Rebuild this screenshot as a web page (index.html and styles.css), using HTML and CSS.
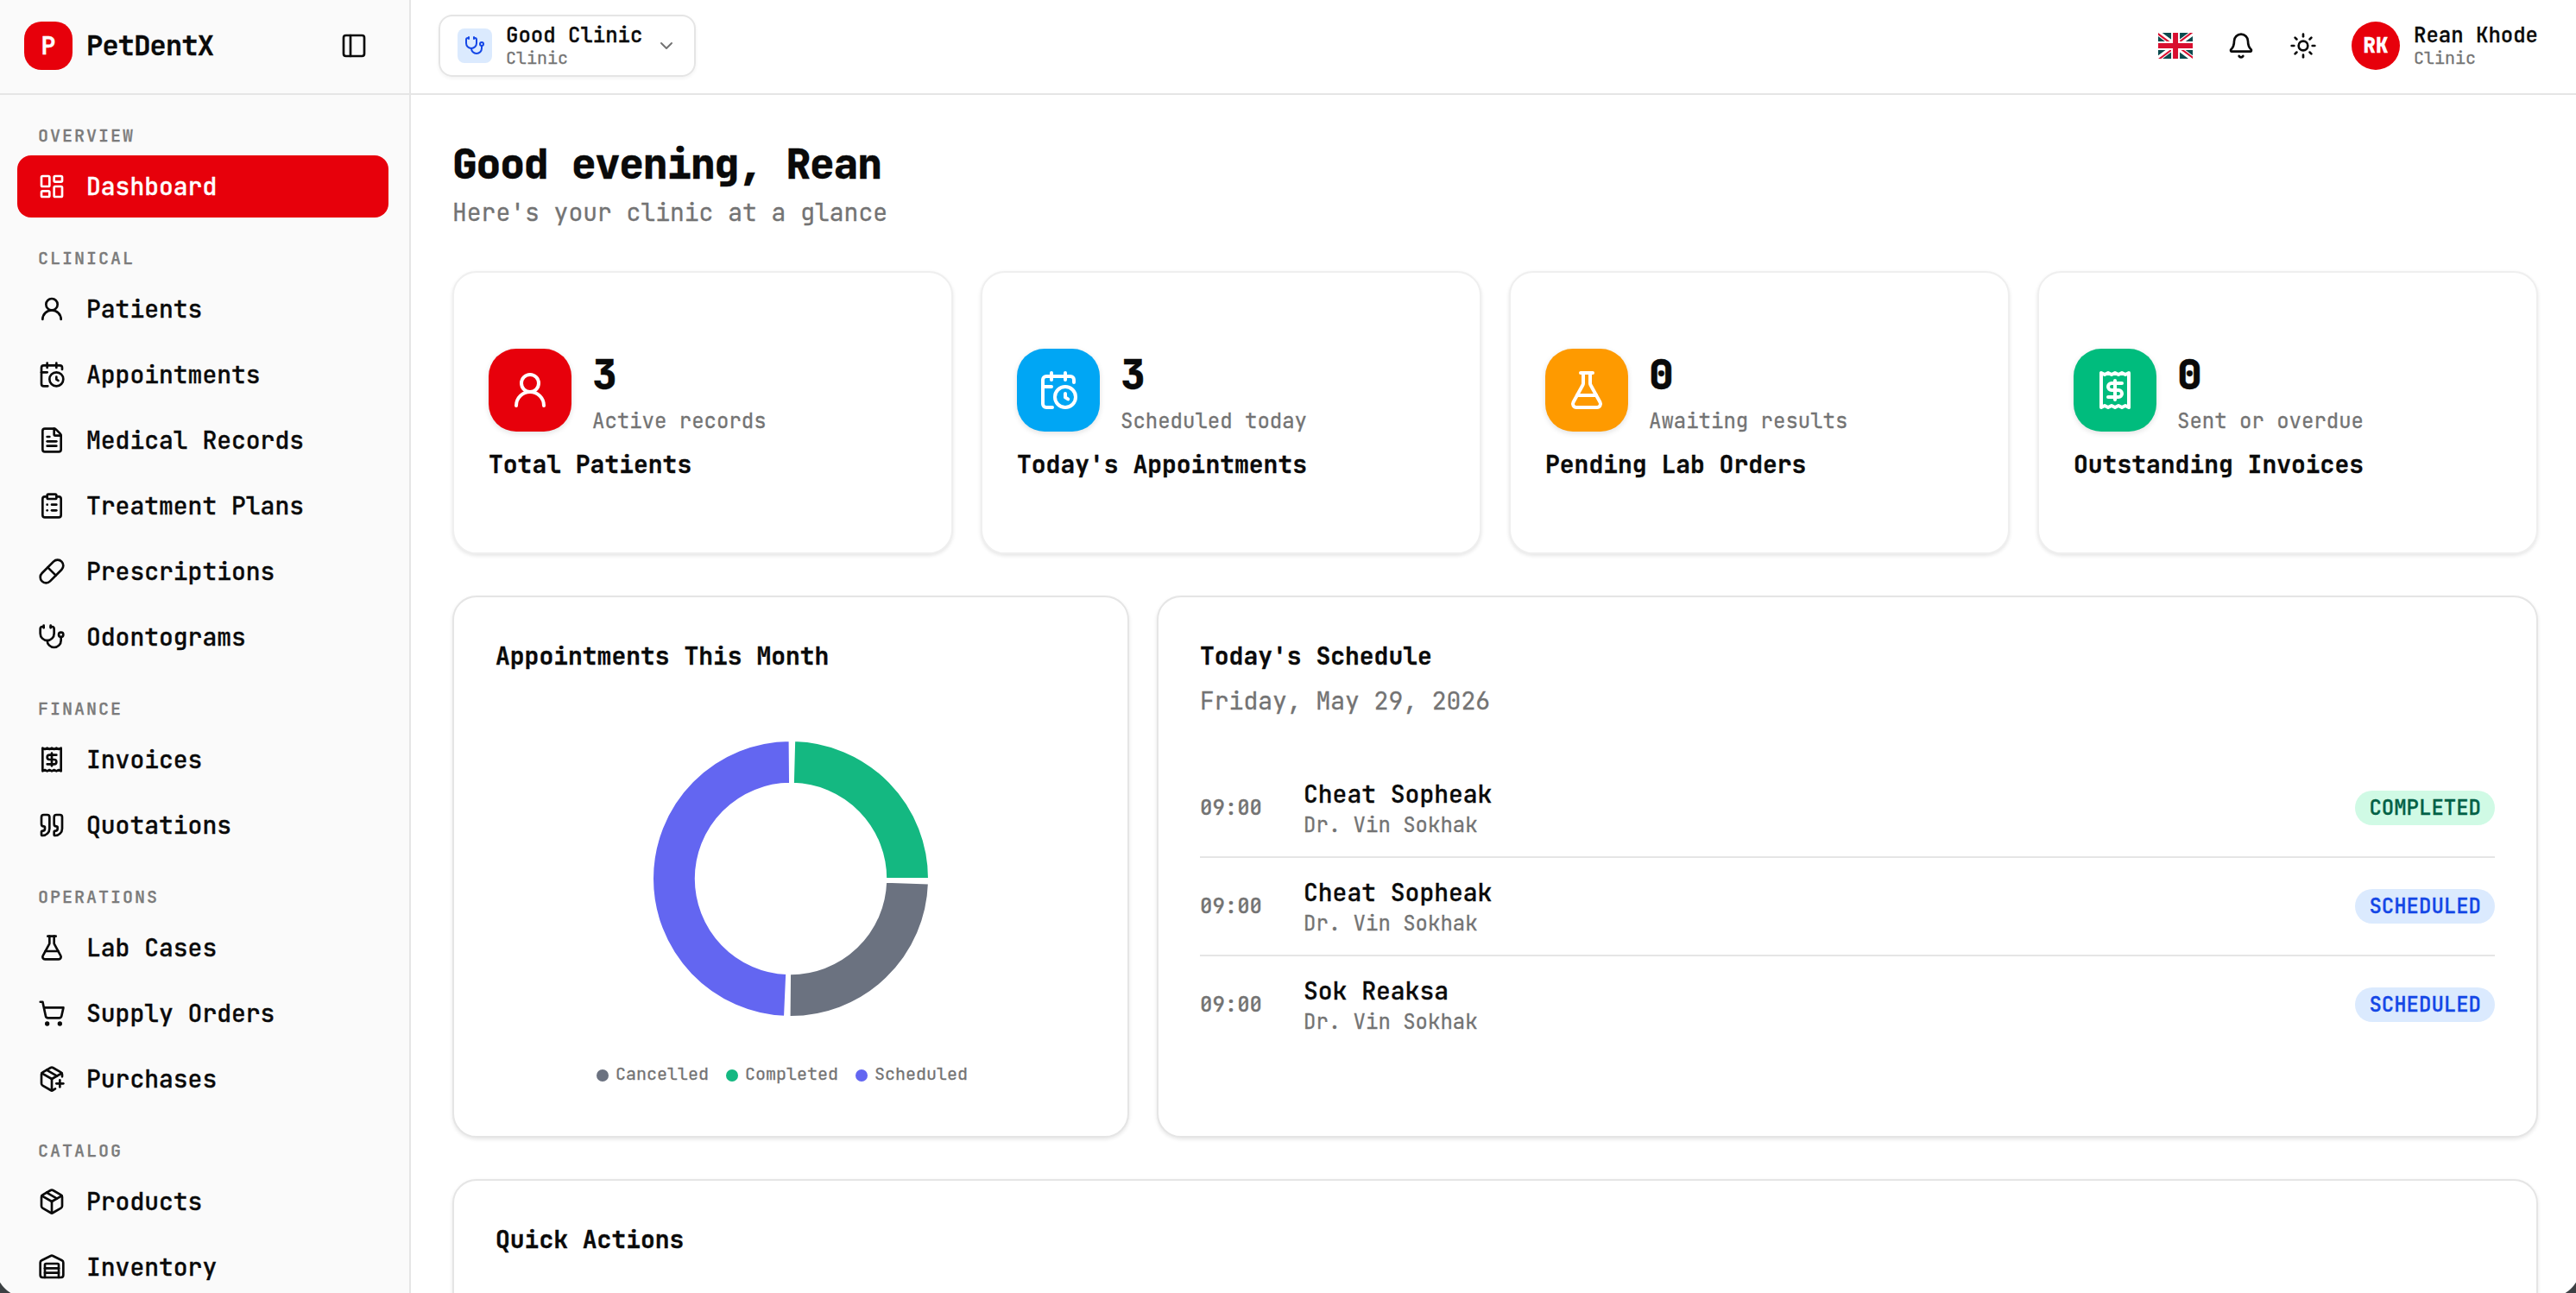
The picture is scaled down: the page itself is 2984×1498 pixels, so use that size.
FILE: index.html
```html
<!DOCTYPE html>
<html lang="en">
<head>
    <meta charset="UTF-8">
    <meta name="viewport" content="width=device-width, initial-scale=1.0">
    <title>PetDentX - Dashboard</title>
    <link rel="stylesheet" href="styles.css">
</head>
<body>

    <!-- Icon set -->
    <svg class="sprite" xmlns="http://www.w3.org/2000/svg">
        <symbol id="i-panel" viewBox="0 0 24 24"><rect width="18" height="18" x="3" y="3" rx="2"/><path d="M9 3v18"/></symbol>
        <symbol id="i-dashboard" viewBox="0 0 24 24"><rect width="7" height="9" x="3" y="3" rx="1"/><rect width="7" height="5" x="14" y="3" rx="1"/><rect width="7" height="9" x="14" y="12" rx="1"/><rect width="7" height="5" x="3" y="16" rx="1"/></symbol>
        <symbol id="i-user" viewBox="0 0 24 24"><circle cx="12" cy="8" r="5"/><path d="M20 21a8 8 0 0 0-16 0"/></symbol>
        <symbol id="i-calendar" viewBox="0 0 24 24"><path d="M16 14v2.2l1.6 1"/><path d="M16 2v4"/><path d="M21 7.5V6a2 2 0 0 0-2-2H5a2 2 0 0 0-2 2v14a2 2 0 0 0 2 2h3.5"/><path d="M3 10h5"/><path d="M8 2v4"/><circle cx="16" cy="16" r="6"/></symbol>
        <symbol id="i-file" viewBox="0 0 24 24"><path d="M6 22a2 2 0 0 1-2-2V4a2 2 0 0 1 2-2h8a2.4 2.4 0 0 1 1.704.706l3.588 3.588A2.4 2.4 0 0 1 20 8v12a2 2 0 0 1-2 2z"/><path d="M14 2v5a1 1 0 0 0 1 1h5"/><path d="M10 9H8"/><path d="M16 13H8"/><path d="M16 17H8"/></symbol>
        <symbol id="i-clipboard" viewBox="0 0 24 24"><rect width="8" height="4" x="8" y="2" rx="1"/><path d="M16 4h2a2 2 0 0 1 2 2v14a2 2 0 0 1-2 2H6a2 2 0 0 1-2-2V6a2 2 0 0 1 2-2h2"/><path d="M12 11h4"/><path d="M12 16h4"/><path d="M8 11h.01"/><path d="M8 16h.01"/></symbol>
        <symbol id="i-pill" viewBox="0 0 24 24"><path d="m10.5 20.5 10-10a4.95 4.95 0 1 0-7-7l-10 10a4.95 4.95 0 1 0 7 7Z"/><path d="m8.5 8.5 7 7"/></symbol>
        <symbol id="i-stethoscope" viewBox="0 0 24 24"><path d="M11 2v2"/><path d="M5 2v2"/><path d="M5 3H4a2 2 0 0 0-2 2v4a6 6 0 0 0 12 0V5a2 2 0 0 0-2-2h-1"/><path d="M8 15a6 6 0 0 0 12 0v-3"/><circle cx="20" cy="10" r="2"/></symbol>
        <symbol id="i-receipt" viewBox="0 0 24 24"><path d="M4 2v20l2-1 2 1 2-1 2 1 2-1 2 1 2-1 2 1V2l-2 1-2-1-2 1-2-1-2 1-2-1-2 1Z"/><path d="M16 8h-6a2 2 0 1 0 0 4h4a2 2 0 1 1 0 4H8"/><path d="M12 17.5v-11"/></symbol>
        <symbol id="i-quote" viewBox="0 0 24 24"><path d="M16 3a2 2 0 0 0-2 2v6a2 2 0 0 0 2 2 1 1 0 0 1 1 1v1a2 2 0 0 1-2 2 1 1 0 0 0-1 1v2a1 1 0 0 0 1 1 6 6 0 0 0 6-6V5a2 2 0 0 0-2-2z"/><path d="M5 3a2 2 0 0 0-2 2v6a2 2 0 0 0 2 2 1 1 0 0 1 1 1v1a2 2 0 0 1-2 2 1 1 0 0 0-1 1v2a1 1 0 0 0 1 1 6 6 0 0 0 6-6V5a2 2 0 0 0-2-2z"/></symbol>
        <symbol id="i-flask" viewBox="0 0 24 24"><path d="M14 2v6a2 2 0 0 0 .245.96l5.51 10.08A2 2 0 0 1 18 22H6a2 2 0 0 1-1.755-2.96l5.51-10.08A2 2 0 0 0 10 8V2"/><path d="M6.453 15h11.094"/><path d="M8.5 2h7"/></symbol>
        <symbol id="i-cart" viewBox="0 0 24 24"><circle cx="8" cy="21" r="1"/><circle cx="19" cy="21" r="1"/><path d="M2.05 2.05h2l2.66 12.42a2 2 0 0 0 2 1.58h9.78a2 2 0 0 0 1.95-1.57l1.65-7.43H5.12"/></symbol>
        <symbol id="i-package-plus" viewBox="0 0 24 24"><path d="M16 16h6"/><path d="M19 13v6"/><path d="M21 10V8a2 2 0 0 0-1-1.73l-7-4a2 2 0 0 0-2 0l-7 4A2 2 0 0 0 3 8v8a2 2 0 0 0 1 1.73l7 4a2 2 0 0 0 2 0l2-1.14"/><path d="m7.5 4.27 9 5.15"/><path d="M3.29 7 12 12l8.71-5"/><path d="M12 22V12"/></symbol>
        <symbol id="i-package" viewBox="0 0 24 24"><path d="M11 21.73a2 2 0 0 0 2 0l7-4A2 2 0 0 0 21 16V8a2 2 0 0 0-1-1.73l-7-4a2 2 0 0 0-2 0l-7 4A2 2 0 0 0 3 8v8a2 2 0 0 0 1 1.73z"/><path d="M12 22V12"/><path d="M3.29 7 12 12l8.71-5"/><path d="m7.5 4.27 9 5.15"/></symbol>
        <symbol id="i-warehouse" viewBox="0 0 24 24"><path d="M18 21V10a1 1 0 0 0-1-1H7a1 1 0 0 0-1 1v11"/><path d="M22 19a2 2 0 0 1-2 2H4a2 2 0 0 1-2-2V8a2 2 0 0 1 1.132-1.803l7.95-3.974a2 2 0 0 1 1.837 0l7.948 3.974A2 2 0 0 1 22 8z"/><path d="M6 13h12"/><path d="M6 17h12"/></symbol>
        <symbol id="i-bell" viewBox="0 0 24 24"><path d="M10.268 21a2 2 0 0 0 3.464 0"/><path d="M3.262 15.326A1 1 0 0 0 4 17h16a1 1 0 0 0 .74-1.673C19.41 13.956 18 12.499 18 8A6 6 0 0 0 6 8c0 4.499-1.411 5.956-2.738 7.326"/></symbol>
        <symbol id="i-sun" viewBox="0 0 24 24"><circle cx="12" cy="12" r="4"/><path d="M12 2v2"/><path d="M12 20v2"/><path d="m4.93 4.93 1.41 1.41"/><path d="m17.66 17.66 1.41 1.41"/><path d="M2 12h2"/><path d="M20 12h2"/><path d="m6.34 17.66-1.41 1.41"/><path d="m19.07 4.93-1.41 1.41"/></symbol>
        <symbol id="i-chevron" viewBox="0 0 24 24"><path d="m6 9 6 6 6-6"/></symbol>
    </svg>

    <div class="app">
        <aside class="sidebar">
            <div class="brand">
                <div class="logo">P</div>
                <span class="brand-name">PetDentX</span>
                <svg class="icon"><use href="#i-panel"/></svg>
            </div>

            <nav class="nav">
                <h4>OVERVIEW</h4>
                <a class="nav-item active"><svg class="icon"><use href="#i-dashboard"/></svg>Dashboard</a>

                <h4>CLINICAL</h4>
                <a class="nav-item"><svg class="icon"><use href="#i-user"/></svg>Patients</a>
                <a class="nav-item"><svg class="icon"><use href="#i-calendar"/></svg>Appointments</a>
                <a class="nav-item"><svg class="icon"><use href="#i-file"/></svg>Medical Records</a>
                <a class="nav-item"><svg class="icon"><use href="#i-clipboard"/></svg>Treatment Plans</a>
                <a class="nav-item"><svg class="icon"><use href="#i-pill"/></svg>Prescriptions</a>
                <a class="nav-item"><svg class="icon"><use href="#i-stethoscope"/></svg>Odontograms</a>

                <h4>FINANCE</h4>
                <a class="nav-item"><svg class="icon"><use href="#i-receipt"/></svg>Invoices</a>
                <a class="nav-item"><svg class="icon"><use href="#i-quote"/></svg>Quotations</a>

                <h4>OPERATIONS</h4>
                <a class="nav-item"><svg class="icon"><use href="#i-flask"/></svg>Lab Cases</a>
                <a class="nav-item"><svg class="icon"><use href="#i-cart"/></svg>Supply Orders</a>
                <a class="nav-item"><svg class="icon"><use href="#i-package-plus"/></svg>Purchases</a>

                <h4>CATALOG</h4>
                <a class="nav-item"><svg class="icon"><use href="#i-package"/></svg>Products</a>
                <a class="nav-item"><svg class="icon"><use href="#i-warehouse"/></svg>Inventory</a>
            </nav>
        </aside>

        <div class="page">
            <header class="topbar">
                <div class="clinic-select">
                    <div class="clinic-icon"><svg class="icon"><use href="#i-stethoscope"/></svg></div>
                    <div class="two-lines">
                        <strong>Good Clinic</strong>
                        <small>Clinic</small>
                    </div>
                    <svg class="icon chevron"><use href="#i-chevron"/></svg>
                </div>

                <div class="tools">
                    <svg class="flag" viewBox="0 0 640 480">
                        <path fill="#0b4a4e" d="M0 0h640v480H0z"/>
                        <path fill="#fff" d="m75 0 244 181L562 0h78v62L400 241l240 178v61h-80L320 301 81 480H0v-60l239-178L0 64V0z"/>
                        <path fill="#d80f30" d="m424 281 216 159v40L369 281zm-184 20 6 35L54 480H0zM640 0v3L391 191l2-44L590 0zM0 0l239 176h-60L0 42z"/>
                        <path fill="#fff" d="M241 0v480h160V0zM0 160v160h640V160z"/>
                        <path fill="#d80f30" d="M0 193v96h640v-96zM273 0v480h96V0z"/>
                    </svg>
                    <svg class="icon"><use href="#i-bell"/></svg>
                    <svg class="icon"><use href="#i-sun"/></svg>
                    <div class="profile">
                        <div class="avatar">RK</div>
                        <div class="two-lines">
                            <strong>Rean Khode</strong>
                            <small>Clinic</small>
                        </div>
                    </div>
                </div>
            </header>

            <main class="content">
                <h1>Good evening, Rean</h1>
                <p class="subtitle">Here's your clinic at a glance</p>

                <section class="stats">
                    <div class="card stat">
                        <div class="stat-top">
                            <div class="stat-icon red"><svg class="icon"><use href="#i-user"/></svg></div>
                            <div>
                                <div class="stat-value">3</div>
                                <div class="stat-note">Active records</div>
                            </div>
                        </div>
                        <div class="stat-label">Total Patients</div>
                    </div>
                    <div class="card stat">
                        <div class="stat-top">
                            <div class="stat-icon blue"><svg class="icon"><use href="#i-calendar"/></svg></div>
                            <div>
                                <div class="stat-value">3</div>
                                <div class="stat-note">Scheduled today</div>
                            </div>
                        </div>
                        <div class="stat-label">Today's Appointments</div>
                    </div>
                    <div class="card stat">
                        <div class="stat-top">
                            <div class="stat-icon orange"><svg class="icon"><use href="#i-flask"/></svg></div>
                            <div>
                                <div class="stat-value">0</div>
                                <div class="stat-note">Awaiting results</div>
                            </div>
                        </div>
                        <div class="stat-label">Pending Lab Orders</div>
                    </div>
                    <div class="card stat">
                        <div class="stat-top">
                            <div class="stat-icon green"><svg class="icon"><use href="#i-receipt"/></svg></div>
                            <div>
                                <div class="stat-value">0</div>
                                <div class="stat-note">Sent or overdue</div>
                            </div>
                        </div>
                        <div class="stat-label">Outstanding Invoices</div>
                    </div>
                </section>

                <section class="panels">
                    <div class="card panel">
                        <h2>Appointments This Month</h2>
                        <svg class="donut" viewBox="0 0 320 320" stroke="#fff" stroke-width="2">
                            <path fill="#14b881" d="M320 160A160 160 0 0 0 164.19 .05L162.88 49.84A110.2 110.2 0 0 1 270.2 160Z"/>
                            <path fill="#6366f1" d="M158.6 .01A160 160 0 0 0 0 160A160 160 0 0 0 153.02 319.85L155.19 270.1A110.2 110.2 0 0 1 49.8 160A110.2 110.2 0 0 1 159.04 49.8Z"/>
                            <path fill="#6b7280" d="M158.6 319.99A160 160 0 0 0 319.9 165.58L270.13 163.85A110.2 110.2 0 0 1 159.04 270.2Z"/>
                        </svg>
                        <ul class="legend">
                            <li><i class="dot cancelled"></i>Cancelled</li>
                            <li><i class="dot completed"></i>Completed</li>
                            <li><i class="dot scheduled"></i>Scheduled</li>
                        </ul>
                    </div>

                    <div class="card panel">
                        <h2>Today's Schedule</h2>
                        <p class="date">Friday, May 29, 2026</p>
                        <div class="schedule">
                            <div class="visit">
                                <span class="time">09:00</span>
                                <div class="who">
                                    <div class="patient">Cheat Sopheak</div>
                                    <div class="doctor">Dr. Vin Sokhak</div>
                                </div>
                                <span class="badge badge-done">COMPLETED</span>
                            </div>
                            <div class="visit">
                                <span class="time">09:00</span>
                                <div class="who">
                                    <div class="patient">Cheat Sopheak</div>
                                    <div class="doctor">Dr. Vin Sokhak</div>
                                </div>
                                <span class="badge">SCHEDULED</span>
                            </div>
                            <div class="visit">
                                <span class="time">09:00</span>
                                <div class="who">
                                    <div class="patient">Sok Reaksa</div>
                                    <div class="doctor">Dr. Vin Sokhak</div>
                                </div>
                                <span class="badge">SCHEDULED</span>
                            </div>
                        </div>
                    </div>
                </section>

                <section class="card panel quick">
                    <h2>Quick Actions</h2>
                </section>
            </main>
        </div>
    </div>

    <!-- Rounded window corners -->
    <div class="corner corner-left"></div>
    <div class="corner corner-right"></div>

</body>
</html>
```
FILE: styles.css
```css
* {
    box-sizing: border-box;
    margin: 0;
    padding: 0;
}

body {
    font-family: "JetBrains Mono", "DejaVu Sans Mono", "Liberation Mono", monospace;
    font-size: 28px;
    -webkit-text-stroke: 0.3px;
    color: #0a0a0a;
    background-color: #fff;
    overflow: hidden;
}

.sprite {
    display: none;
}

.icon {
    width: 32px;
    height: 32px;
    flex-shrink: 0;
    fill: none;
    stroke: currentColor;
    stroke-width: 2;
    stroke-linecap: round;
    stroke-linejoin: round;
}

.app {
    display: flex;
    height: 1498px;
    overflow: hidden;
}

/* Sidebar */
.sidebar {
    width: 476px;
    flex-shrink: 0;
    background-color: #fafafa;
    border-right: 2px solid #e5e5e5;
}

.brand {
    height: 110px;
    display: flex;
    align-items: center;
    gap: 16px;
    padding: 0 48px 2px 28px;
    border-bottom: 2px solid #e5e5e5;
}

.logo {
    width: 56px;
    height: 56px;
    border-radius: 20px;
    background-color: #e7000b;
    color: #fff;
    font-weight: 700;
    line-height: 56px;
    text-align: center;
}

.brand-name {
    flex: 1;
    font-size: 32px;
    font-weight: 700;
    line-height: 40px;
    letter-spacing: -0.025em;
}

.nav {
    display: flex;
    flex-direction: column;
    gap: 4px;
    padding: 0 24px 0 20px;
}

.nav h4 {
    font-size: 20px;
    font-weight: 500;
    letter-spacing: 0.1em;
    line-height: 46px;
    margin: 20px 0 -4px 24px;
    color: #7b7b7b;
}

.nav h4:first-child {
    margin-top: 24px;
}

.nav-item {
    display: flex;
    align-items: center;
    gap: 24px;
    height: 72px;
    padding: 0 24px;
    border-radius: 16px;
    font-weight: 500;
    line-height: 40px;
}

.nav-item.active {
    background-color: #e7000b;
    color: #fff;
}

/* Top bar */
.page {
    flex: 1;
    min-width: 0;
}

.topbar {
    height: 110px;
    display: flex;
    align-items: center;
    justify-content: space-between;
    padding: 0 44px 2px 32px;
    border-bottom: 2px solid #e5e5e5;
}

.clinic-select {
    display: flex;
    align-items: center;
    gap: 16px;
    height: 72px;
    padding: 0 20px;
    border: 2px solid #e5e5e5;
    border-radius: 16px;
    box-shadow: 0 2px 4px rgba(0, 0, 0, 0.05);
}

.clinic-icon {
    width: 40px;
    height: 40px;
    display: flex;
    align-items: center;
    justify-content: center;
    border-radius: 8px;
    background-color: #dbeafe;
    color: #1447e6;
}

.clinic-icon .icon,
.chevron {
    width: 24px;
    height: 24px;
}

.chevron {
    color: #737373;
}

.two-lines {
    display: flex;
    flex-direction: column;
}

.two-lines strong {
    font-size: 24px;
    font-weight: 500;
    line-height: 28px;
}

.two-lines small {
    font-size: 20px;
    line-height: 24px;
    color: #737373;
}

.tools {
    display: flex;
    align-items: center;
    gap: 40px;
}

.flag {
    width: 40px;
    height: 30px;
}

.profile {
    display: flex;
    align-items: center;
    gap: 16px;
}

.avatar {
    width: 56px;
    height: 56px;
    border-radius: 50%;
    background-color: #e7000b;
    color: #fff;
    font-size: 24px;
    font-weight: 800;
    line-height: 56px;
    text-align: center;
}

/* Content */
.content {
    padding: 50px 44px 0 48px;
}

h1 {
    font-size: 48px;
    font-weight: 800;
    line-height: 60px;
    letter-spacing: -0.025em;
}

.subtitle {
    line-height: 40px;
    margin-top: 6px;
    color: #737373;
}

.card {
    border: 2px solid #e5e5e5;
    border-radius: 28px;
    background-color: #fff;
    box-shadow: 0 2px 4px rgba(0, 0, 0, 0.1);
}

.stats {
    display: grid;
    grid-template-columns: repeat(4, 1fr);
    gap: 32px;
    margin-top: 48px;
}

.stat {
    height: 328px;
    padding: 88px 40px 0;
    border-color: #efefef;
}

.stat-top {
    display: flex;
    gap: 24px;
}

.stat-icon {
    width: 96px;
    height: 96px;
    display: flex;
    align-items: center;
    justify-content: center;
    border-radius: 32px;
    color: #fff;
    box-shadow: 0 2px 6px rgba(0, 0, 0, 0.12);
}

.stat-icon .icon {
    width: 48px;
    height: 48px;
}

.red { background-color: #e7000b; }
.blue { background-color: #00a6f4; }
.orange { background-color: #fe9a00; }
.green { background-color: #00bc7d; }

.stat-value {
    font-size: 48px;
    font-weight: 800;
    line-height: 60px;
    margin-bottom: 2px;
}

.stat-note {
    font-size: 24px;
    line-height: 44px;
    color: #737373;
}

.stat-label {
    font-weight: 600;
    line-height: 40px;
    margin-top: 8px;
}

.panels {
    display: grid;
    grid-template-columns: 784px 1fr;
    gap: 32px;
    margin-top: 48px;
}

.panel {
    height: 628px;
    padding: 48px;
}

.panel h2 {
    font-size: 28px;
    font-weight: 600;
    line-height: 40px;
}

.donut {
    display: block;
    width: 320px;
    height: 320px;
    margin: 78px auto 0;
}

.legend {
    display: flex;
    justify-content: center;
    list-style: none;
    margin-top: 52px;
    font-size: 20px;
    line-height: 28px;
    color: #737373;
}

.legend li {
    display: flex;
    align-items: center;
    gap: 8px;
    margin-right: 20px;
}

.dot {
    width: 14px;
    height: 14px;
    border-radius: 50%;
    margin-top: 3px;
}

.cancelled { background-color: #6b7280; }
.completed { background-color: #14b881; }
.scheduled { background-color: #6366f1; }

.date {
    line-height: 40px;
    margin-top: 12px;
    color: #737373;
}

.schedule {
    margin-top: 48px;
}

.visit {
    display: flex;
    align-items: center;
    gap: 24px;
    height: 114px;
    border-bottom: 2px solid #e5e5e5;
}

.visit:last-child {
    border-bottom-color: transparent;
}

.time {
    width: 96px;
    font-size: 24px;
    font-weight: 500;
    line-height: 32px;
    font-feature-settings: "zero";
    color: #737373;
}

.who {
    flex: 1;
}

.patient {
    font-weight: 500;
    line-height: 40px;
}

.doctor {
    font-size: 24px;
    line-height: 32px;
    color: #737373;
}

.badge {
    padding: 0 16px;
    border-radius: 20px;
    font-size: 24px;
    font-weight: 500;
    line-height: 40px;
    background-color: #dbeafe;
    color: #1447e6;
}

.badge-done {
    background-color: #d0fae5;
    color: #006045;
}

.quick {
    margin-top: 48px;
}

/* Window corners */
.corner {
    position: fixed;
    bottom: 0;
    width: 32px;
    height: 32px;
}

.corner-left {
    left: 0;
    background: radial-gradient(circle at 100% 0, transparent 37px, #3c4043 38px);
}

.corner-right {
    right: 0;
    background: radial-gradient(circle at 0 0, transparent 37px, #3c4043 38px);
}
```
